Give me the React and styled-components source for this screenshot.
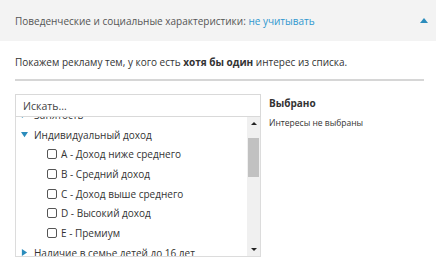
import { useEffect, useRef } from "react";
import styled, { createGlobalStyle } from "styled-components";

const GlobalStyle = createGlobalStyle`
    body {
        margin: 0;
        background: #fff;
        font-family: "Open Sans", "Liberation Sans", sans-serif;
        color: #333;
    }
`;

const groups = [
    { title: "Занятость", open: false },
    {
        title: "Индивидуальный доход",
        open: true,
        items: [
            "A - Доход ниже среднего",
            "B - Средний доход",
            "C - Доход выше среднего",
            "D - Высокий доход",
            "E - Премиум",
        ],
    },
    { title: "Наличие в семье детей до 16 лет", open: false },
    { title: "Семейное положение", open: false },
];

export default function App() {
    const viewportRef = useRef(null);

    useEffect(() => {
        if (viewportRef.current) viewportRef.current.scrollTop = 12;
    }, []);

    return (
        <>
            <GlobalStyle />
            <Header>
                <HeaderTitle>
                    Поведенческие и социальные характеристики: <HeaderLink>не учитывать</HeaderLink>
                </HeaderTitle>
                <Caret viewBox="0 0 8 5" width="8" height="5">
                    <path d="M0 5 L4 0 L8 5 Z" fill="#2b8cbc" />
                </Caret>
            </Header>

            <Body>
                <Description>
                    Покажем рекламу тем, у кого есть <b>хотя бы один</b> интерес из списка.
                </Description>
                <Divider />

                <Picker>
                    <ListBox>
                        <SearchInput placeholder="Искать..." />
                        <ListArea>
                            <Viewport ref={viewportRef}>
                                {groups.map((group) => (
                                    <div key={group.title}>
                                        <GroupRow>
                                            <Toggle viewBox="0 0 8 8" width="7" height="7" open={group.open ? 1 : 0}>
                                                <path d="M1 0 L7 4 L1 8 Z" fill="#2b8cbc" />
                                            </Toggle>
                                            {group.title}
                                        </GroupRow>
                                        {group.open &&
                                            group.items.map((item) => (
                                                <ItemRow key={item}>
                                                    <CheckBox />
                                                    {item}
                                                </ItemRow>
                                            ))}
                                    </div>
                                ))}
                            </Viewport>
                            <ScrollBar>
                                <ScrollArrow>
                                    <svg viewBox="0 0 6 3" width="6" height="3">
                                        <path d="M0 3 L3 0 L6 3 Z" fill="#222" />
                                    </svg>
                                </ScrollArrow>
                                <ScrollTrack>
                                    <ScrollThumb />
                                </ScrollTrack>
                                <ScrollArrow>
                                    <svg viewBox="0 0 6 3" width="6" height="3">
                                        <path d="M0 0 L3 3 L6 0 Z" fill="#222" />
                                    </svg>
                                </ScrollArrow>
                            </ScrollBar>
                        </ListArea>
                    </ListBox>

                    <Selected>
                        <SelectedTitle>Выбрано</SelectedTitle>
                        <SelectedEmpty>Интересы не выбраны</SelectedEmpty>
                    </Selected>
                </Picker>
            </Body>
        </>
    );
}

const Header = styled.div`
    height: 41px;
    background: #f3f3f3;
    display: flex;
    align-items: center;
    justify-content: space-between;
    padding: 0 8px 0 15px;
`;

const HeaderTitle = styled.div`
    font-size: 10px;
    color: #555;
`;

const HeaderLink = styled.span`
    color: #2f97cf;
    cursor: pointer;
`;

const Caret = styled.svg`
    display: block;
`;

const Body = styled.div`
    padding: 0 12px 0 15px;
`;

const Description = styled.div`
    font-size: 10px;
    line-height: 16px;
    margin-top: 13px;
    color: #333;

    b {
        font-weight: 700;
    }
`;

const Divider = styled.div`
    height: 2px;
    background: #d6d6d6;
    margin-top: 9px;
`;

const Picker = styled.div`
    display: flex;
    gap: 8px;
    margin-top: 13px;
`;

const ListBox = styled.div`
    width: 246px;
    display: flex;
    flex-direction: column;
`;

const SearchInput = styled.input`
    box-sizing: border-box;
    height: 23px;
    width: 100%;
    border: 1px solid #d9d9d9;
    padding: 0 7px;
    font-family: inherit;
    font-size: 10.5px;
    outline: none;

    &::placeholder {
        color: #444;
    }
`;

const ListArea = styled.div`
    display: flex;
    height: 139px;
    border: 1px solid #dcdcdc;
    border-top: none;
`;

const Viewport = styled.div`
    flex: 1;
    overflow: hidden;
`;

const GroupRow = styled.div`
    display: flex;
    align-items: center;
    gap: 6px;
    height: 19.7px;
    padding-left: 5px;
    font-size: 10px;
    color: #333;
    white-space: nowrap;
`;

const Toggle = styled.svg`
    display: block;
    transform: rotate(${(props) => (props.open ? "90deg" : "0deg")});
`;

const ItemRow = styled.div`
    display: flex;
    align-items: center;
    gap: 4px;
    height: 19.7px;
    padding-left: 31px;
    font-size: 10px;
    color: #333;
    white-space: nowrap;
`;

const CheckBox = styled.span`
    box-sizing: border-box;
    width: 10px;
    height: 10px;
    border: 1px solid #555;
    border-radius: 2px;
    background: #fff;
`;

const ScrollBar = styled.div`
    width: 13px;
    background: #f0f0f0;
    display: flex;
    flex-direction: column;
`;

const ScrollArrow = styled.div`
    height: 13px;
    display: flex;
    align-items: center;
    justify-content: center;
`;

const ScrollTrack = styled.div`
    flex: 1;
    padding-top: 8px;
`;

const ScrollThumb = styled.div`
    height: 39px;
    margin: 0 1px;
    background: #c1c1c1;
`;

const Selected = styled.div`
    padding-top: 2px;
`;

const SelectedTitle = styled.div`
    font-size: 10px;
    font-weight: 700;
    color: #333;
`;

const SelectedEmpty = styled.div`
    font-size: 8.5px;
    color: #333;
    margin-top: 7px;
`;
